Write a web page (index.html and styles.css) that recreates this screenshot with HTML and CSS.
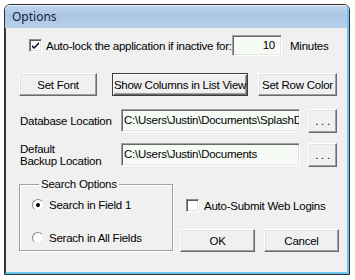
FILE: index.html
```html
<!DOCTYPE html>
<html lang="en">
<head>
    <meta charset="UTF-8">
    <title>Options</title>
    <link rel="stylesheet" href="styles.css">
</head>
<body>
    <div class="window">
        <div class="titlebar">Options</div>
        <div class="client">
            <div class="lock-row">
                <span class="check checked">
                    <svg width="9" height="9" viewBox="0 0 9 9"><path d="M1 4 L3 6 L8 1 L8 3 L3 8 L1 6 Z" fill="#000"/></svg>
                </span>
                <span class="lock-label">Auto-lock the application if inactive for:</span>
                <span class="field num">10</span>
                <span class="unit">Minutes</span>
            </div>
            <div class="btn-row">
                <button class="btn w-font">Set Font</button>
                <button class="btn default w-cols">Show Columns in List View</button>
                <button class="btn w-color">Set Row Color</button>
            </div>
            <div class="locations">
                <div class="loc-label">Database Location</div>
                <div class="field path">C:\Users\Justin\Documents\SplashData\SplashID.vid</div>
                <button class="btn browse">. . .</button>
                <div class="loc-label">Default<br>Backup Location</div>
                <div class="field path">C:\Users\Justin\Documents</div>
                <button class="btn browse">. . .</button>
            </div>
            <div class="bottom">
                <fieldset class="group">
                    <legend>Search Options</legend>
                    <div class="radio-row first"><span class="radio on"></span>Search in Field 1</div>
                    <div class="radio-row"><span class="radio"></span>Serach in All Fields</div>
                </fieldset>
                <div class="side">
                    <div class="check-row"><span class="check"></span>Auto-Submit Web Logins</div>
                    <div class="actions">
                        <button class="btn w-ok">OK</button>
                        <button class="btn w-cancel">Cancel</button>
                    </div>
                </div>
            </div>
        </div>
    </div>
</body>
</html>
```

FILE: styles.css
```css
body {
    margin: 0;
    background: #fff;
    font-family: "Liberation Sans", Arial, sans-serif;
    font-size: 11.5px;
    letter-spacing: -0.25px;
    color: #000;
}

.window {
    margin: 4px 0 0 4px;
    width: 344px;
    height: 269px;
    border: 1px solid #2e2e2e;
    border-radius: 6px 6px 0 0;
    display: flex;
    flex-direction: column;
    overflow: hidden;
}

.titlebar {
    flex: none;
    height: 23px;
    box-sizing: border-box;
    padding-left: 7px;
    line-height: 23px;
    font-family: "Noto Sans", sans-serif;
    font-size: 12px;
    letter-spacing: 0;
    color: #10233a;
    background: linear-gradient(#c3d6ee, #aac5e4 45%, #b9d0eb);
    border-right: 2px solid #6cc7ef;
    box-shadow: inset 0 1px rgba(255, 255, 255, 0.7);
}

.client {
    flex: 1;
    background: #f0f0f0;
    border-left: 1px solid #3a3a3a;
    border-right: 2px solid #6cc7ef;
    border-bottom: 2px solid #6cc7ef;
    padding: 7px 0 0 13px;
}

/* sunken boxes */
.field {
    box-sizing: border-box;
    background: #f6fbf6;
    border: 1px solid;
    border-color: #a0a0a0 #fff #fff #a0a0a0;
    box-shadow: inset 1px 1px #696969, inset -1px -1px #e3e3e3;
    white-space: nowrap;
    overflow: hidden;
}

.check {
    box-sizing: border-box;
    width: 13px;
    height: 13px;
    flex: none;
    display: flex;
    align-items: center;
    justify-content: center;
    background: #fff;
    border: 1px solid;
    border-color: #8a8a8a #fff #fff #8a8a8a;
    box-shadow: inset 1px 1px #5c5c5c, inset -1px -1px #e3e3e3;
}

.btn {
    box-sizing: border-box;
    height: 23px;
    padding: 0;
    font: inherit;
    letter-spacing: inherit;
    white-space: nowrap;
    color: #000;
    background: #f0f0f0;
    border: 1px solid;
    border-color: #fff #6a6a6a #6a6a6a #fff;
    box-shadow: inset -1px -1px #a0a0a0, inset 1px 1px #e3e3e3;
}

.btn.default {
    border: 1px solid #3c3c3c;
    box-shadow: inset 1px 1px #fff, inset -1px -1px #6a6a6a, inset -2px -2px #a0a0a0;
}

.lock-row {
    display: flex;
    align-items: center;
    height: 21px;
    margin-left: 10px;
}

.lock-label {
    margin-left: 4px;
    width: 186px;
    white-space: nowrap;
}

.field.num {
    width: 50px;
    height: 21px;
    line-height: 19px;
    text-align: right;
    padding-right: 6px;
}

.unit {
    margin-left: 8px;
}

.btn-row {
    display: flex;
    margin-top: 17px;
}

.w-font { width: 78px; }
.w-cols { width: 136px; margin-left: 15px; }
.w-color { width: 79px; margin-left: 10px; }

.locations {
    display: grid;
    grid-template-columns: 94px 179px 29px;
    grid-template-rows: 25px 23px;
    column-gap: 8px;
    row-gap: 10px;
    align-items: center;
    margin-top: 12px;
}

.loc-label {
    line-height: 12px;
    padding-left: 1px;
    white-space: nowrap;
}

.field.path {
    height: 23px;
    line-height: 21px;
    padding-left: 2px;
}

.btn.browse {
    height: 24px;
}

.bottom {
    display: flex;
    margin-top: 11px;
}

.group {
    box-sizing: border-box;
    width: 154px;
    height: 74px;
    margin: 0;
    padding: 0 0 0 12px;
    border: 1px solid #a0a0a0;
    box-shadow: 1px 1px #fff, inset 1px 1px #fff;
}

.group legend {
    margin-left: 7px;
    padding: 0 2px;
    line-height: 15px;
}

.radio-row {
    display: flex;
    align-items: center;
    height: 15px;
    margin-top: 18px;
    white-space: nowrap;
}

.radio-row.first {
    margin-top: 5px;
}

.radio {
    box-sizing: border-box;
    width: 12px;
    height: 12px;
    margin-right: 5px;
    border-radius: 50%;
    background: #fff;
    border: 1px solid;
    border-color: #8a8a8a #e8e8e8 #e8e8e8 #8a8a8a;
    display: flex;
    align-items: center;
    justify-content: center;
}

.radio.on::after {
    content: '';
    width: 4px;
    height: 4px;
    border-radius: 50%;
    background: #000;
}

.side {
    margin-left: 7px;
}

.check-row {
    display: flex;
    align-items: center;
    gap: 5px;
    height: 13px;
    margin: 22px 0 0 6px;
    white-space: nowrap;
}

.actions {
    display: flex;
    margin-top: 17px;
}

.w-ok { width: 75px; }
.w-cancel { width: 75px; margin-left: 9px; }
```
